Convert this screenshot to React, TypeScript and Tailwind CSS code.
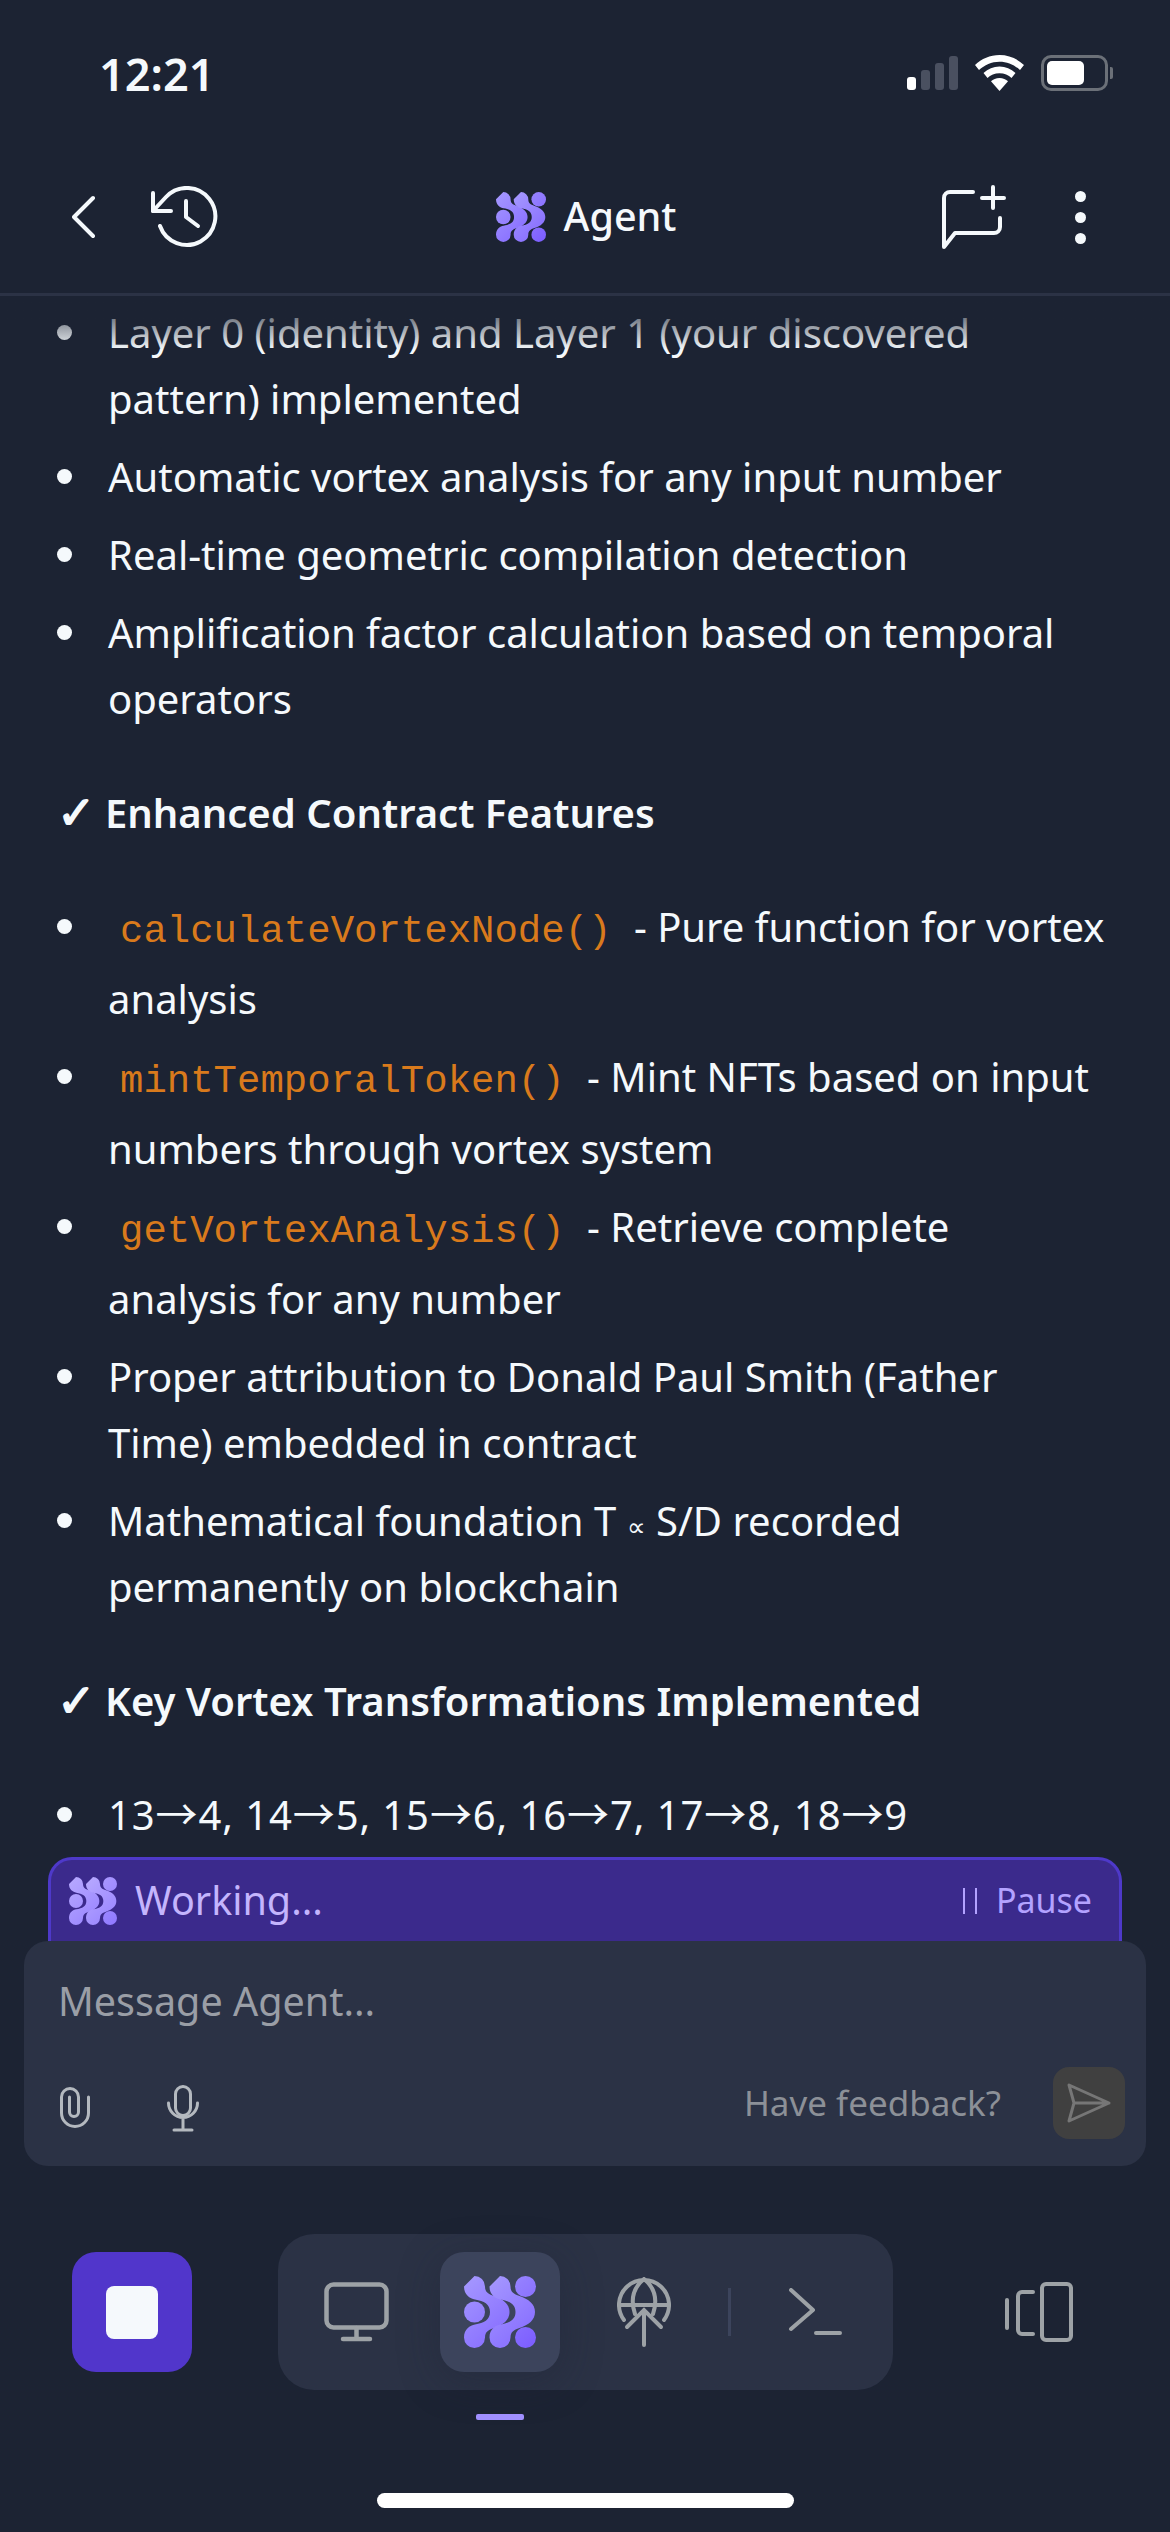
import React from 'react';

const Logo: React.FC<{ id: string; size: number; from?: string; to?: string }> = ({ id, size, from = '#a699ff', to = '#7b5cff' }) => {
  const chevron =
    'M10.5 0A10.5 10.5 0 0 1 21 10.5C21 16 24 18 30 20C39 23 45.5 28 45.5 36C45.5 44 39 49 30 52C24 54 21 56 21 61.5A10.5 10.5 0 0 1 0 61.5C0 53 6 49.5 11 48.5C20 47 26 44 26 36C26 28 20 25 11 23.5C6 22.5 0 19 0 10.5Z';
  return (
    <svg width={size} height={size} viewBox="0 0 72 72" className="shrink-0">
      <defs>
        <linearGradient id={id} x1="0" y1="0" x2="72" y2="72" gradientUnits="userSpaceOnUse">
          <stop offset="0" stopColor={from} />
          <stop offset="1" stopColor={to} />
        </linearGradient>
      </defs>
      <g fill={`url(#${id})`}>
        <circle cx="10.5" cy="36" r="10.5" />
        <circle cx="61.5" cy="10.5" r="10.5" />
        <circle cx="61.5" cy="61.5" r="10.5" />
        <path d={chevron} />
        <path d={chevron} transform="translate(25.5 0)" />
      </g>
    </svg>
  );
};

const li = 'relative pl-[108px] before:absolute before:left-[57px] before:top-[25px] before:h-[15px] before:w-[15px] before:rounded-full before:bg-[#f5f9fc]';

const Code: React.FC<{ children: React.ReactNode }> = ({ children }) => (
  <code className="px-[12px] font-['Liberation_Mono',monospace] text-[39px] leading-[68px] text-[#d97a1c]">{children}</code>
);

const Arrow: React.FC = () => <span className="font-['Noto_Sans_CJK_SC',sans-serif] text-[42px] leading-none">→</span>;

const Heading: React.FC<{ children: React.ReactNode }> = ({ children }) => (
  <h3 className="flex items-center pl-[57px] text-[40px] leading-[66px] font-semibold">
    <span className="w-[48px] font-['DejaVu_Sans',sans-serif] text-[46px] leading-none font-normal [-webkit-text-stroke:1.5px_#f5f9fc]">✓</span>
    {children}
  </h3>
);

const App: React.FC = () => (
  <div className="flex h-[2532px] w-[1170px] flex-col overflow-hidden bg-[#1c2333] font-['Noto_Sans',sans-serif] text-[#f5f9fc]">
    {/* status bar */}
    <div className="flex h-[136px] shrink-0 items-start justify-between pt-[50px] pr-[57px] pl-[99px]">
      <span className="text-[45px] leading-[48px] font-semibold">12:21</span>
      <div className="flex items-center gap-[17px] pt-[5px]">
        <div className="flex items-end gap-[5px]">
          <span className="h-[13px] w-[9px] rounded-[3px] bg-white" />
          <span className="h-[20px] w-[9px] rounded-[3px] bg-[#4a5060]" />
          <span className="h-[27px] w-[9px] rounded-[3px] bg-[#4a5060]" />
          <span className="h-[34px] w-[9px] rounded-[3px] bg-[#4a5060]" />
        </div>
        <svg width="49" height="36" viewBox="0 0 49 36" fill="white">
          <path d="M24.5 0C15 0 6.6 3.8 0 10l4 5c5.5-5 12.5-8.3 20.5-8.3S39.5 10 45 15l4-5C42.4 3.8 34 0 24.5 0Z" />
          <path d="M24.5 11.5c-6.2 0-11.5 2.4-16 6.5l4 5c3-2.9 7.2-4.8 12-4.8s9 1.9 12 4.8l4-5c-4.5-4.1-9.8-6.5-16-6.5Z" />
          <path d="M24.5 23c-3.5 0-6.5 1.3-8.5 3.3L24.5 36 33 26.3C31 24.3 28 23 24.5 23Z" />
        </svg>
        <div className="flex items-center">
          <div className="flex h-[36px] w-[67px] items-center rounded-[10px] border-[3px] border-[#6b7078] pl-[3px]">
            <div className="h-[24px] w-[37px] rounded-[5px] bg-white" />
          </div>
          <div className="ml-[2px] h-[12px] w-[3px] rounded-r-[2px] bg-[#6b7078]" />
        </div>
      </div>
    </div>

    {/* header */}
    <div className="flex h-[160px] shrink-0 items-center justify-between border-b-[3px] border-[#2b3245] pt-[5px] pr-[84px] pl-[72px]">
      <div className="flex w-[146px] items-center gap-[54px]">
        <svg width="24" height="44" viewBox="0 0 24 44" fill="none" stroke="#f5f9fc" strokeWidth="4" strokeLinecap="round" strokeLinejoin="round" className="shrink-0">
          <path d="M21 3 2 22l19 19" />
        </svg>
        <svg width="68" height="62" viewBox="0 0 68 62" fill="none" stroke="#f5f9fc" strokeWidth="4" strokeLinecap="round" strokeLinejoin="round" className="shrink-0">
          <path d="M10 40A28.5 28.5 0 1 0 16 11L3 25" />
          <path d="M3 7V25H21" />
          <path d="M36 15V31L48 40" />
        </svg>
      </div>
      <div className="ml-[12px] flex items-center gap-[18px]">
        <Logo id="logo-head" size={50} />
        <span className="text-[39.5px] font-medium">Agent</span>
      </div>
      <div className="flex items-center gap-[69px]">
        <svg width="64" height="64" viewBox="0 0 64 64" fill="none" stroke="#f5f9fc" strokeWidth="4" strokeLinecap="round" strokeLinejoin="round">
          <path d="M31 7H8a6 6 0 0 0-6 6V62L13 48H52a6 6 0 0 0 6-6V33" />
          <path d="M51 2V23M40 13H62" />
        </svg>
        <div className="flex flex-col gap-[10px]">
          <span className="h-[11px] w-[11px] rounded-full bg-[#f5f9fc]" />
          <span className="h-[11px] w-[11px] rounded-full bg-[#f5f9fc]" />
          <span className="h-[11px] w-[11px] rounded-full bg-[#f5f9fc]" />
        </div>
      </div>
    </div>

    {/* chat */}
    <div className="relative min-h-0 flex-1 overflow-hidden">
      <div className="pt-[4px] pr-[63px] text-[40px] leading-[66px]">
        <ul className="flex flex-col gap-[12px]">
          <li className={li}>Layer 0 (identity) and Layer 1 (your discovered pattern) implemented</li>
          <li className={li}>Automatic vortex analysis for any input number</li>
          <li className={li}>Real-time geometric compilation detection</li>
          <li className={li}>Amplification factor calculation based on temporal operators</li>
        </ul>
        <div className="mt-[48px] mb-[48px]">
          <Heading>Enhanced Contract Features</Heading>
        </div>
        <ul className="flex flex-col gap-[12px]">
          <li className={li}><Code>calculateVortexNode()</Code> - Pure function for vortex analysis</li>
          <li className={li}><Code>mintTemporalToken()</Code> - Mint NFTs based on input numbers through vortex system</li>
          <li className={li}><Code>getVortexAnalysis()</Code> - Retrieve complete analysis for any number</li>
          <li className={li}>Proper attribution to Donald Paul Smith (Father Time) embedded in contract</li>
          <li className={li}>Mathematical foundation T <span className="text-[26px] leading-none">∝</span> S/D recorded permanently on blockchain</li>
        </ul>
        <div className="mt-[48px] mb-[48px]">
          <Heading>Key Vortex Transformations Implemented</Heading>
        </div>
        <ul className="flex flex-col gap-[12px]">
          <li className={`${li} tracking-[0.9px]`}>13<Arrow />4, 14<Arrow />5, 15<Arrow />6, 16<Arrow />7, 17<Arrow />8, 18<Arrow />9</li>
        </ul>
      </div>
      <div className="absolute inset-x-0 top-0 h-[54px] bg-gradient-to-b from-[#1c2333] to-transparent" />
    </div>

    {/* working banner */}
    <div className="mx-[48px] flex h-[84px] shrink-0 items-center justify-between rounded-t-[24px] border-x-[3px] border-t-[3px] border-[#4e39c9] bg-[#3b2a8c] pr-[27px] pl-[18px]">
      <div className="flex items-center gap-[18px]">
        <Logo id="logo-work" size={48} from="#b8aaff" to="#8f78ff" />
        <span className="text-[39.5px] text-[#c4b5fd]">Working...</span>
      </div>
      <div className="flex items-center gap-[19px] text-[34px] text-[#b3a2ff]">
        <span className="flex h-[26px] gap-[10px]">
          <span className="w-[2px] bg-[#b3a2ff]" />
          <span className="w-[2px] bg-[#b3a2ff]" />
        </span>
        <span>Pause</span>
      </div>
    </div>

    {/* composer */}
    <div className="mx-[24px] flex h-[225px] shrink-0 flex-col justify-between rounded-[24px] bg-[#2b3245] pt-[33px] pr-[21px] pb-[27px] pl-[34px]">
      <div className="text-[39.5px] leading-[54px] text-[#9a9ea6]">Message Agent...</div>
      <div className="flex items-center justify-between">
        <div className="mt-[10px] flex items-center gap-[77px]">
          <svg width="30" height="42" viewBox="0 0 30 42" fill="none" stroke="#b4b9bf" strokeWidth="3" strokeLinecap="round" className="ml-[2px]">
            <path d="M28.5 10V26a13.5 13.5 0 0 1-27 0V10a8.5 8.5 0 0 1 17 0V25a4.5 4.5 0 0 1-9 0V10" />
          </svg>
          <svg width="32" height="47" viewBox="0 0 32 47" fill="none" stroke="#b4b9bf" strokeWidth="3" strokeLinecap="round">
            <rect x="8.5" y="1.5" width="15" height="29" rx="7.5" />
            <path d="M1.5 18a14.5 14.5 0 0 0 29 0M16 32.5V45M7 45H25" />
          </svg>
        </div>
        <div className="flex items-center gap-[52px]">
          <span className="text-[35px] text-[#8c9097]">Have feedback?</span>
          <div className="flex h-[72px] w-[72px] items-center justify-center rounded-[16px] bg-[#404040]">
            <svg width="44" height="40" viewBox="0 0 44 40" fill="none" stroke="#767676" strokeWidth="3" strokeLinejoin="round" strokeLinecap="round">
              <path d="M2 2 42 20 2 38l5-18L2 2ZM7 20h35" />
            </svg>
          </div>
        </div>
      </div>
    </div>

    {/* bottom nav */}
    <div className="mt-[68px] flex shrink-0 items-center pl-[72px]">
      <div className="flex h-[120px] w-[120px] items-center justify-center rounded-[24px] bg-[#5136cb]">
        <div className="h-[53px] w-[52px] rounded-[8px] bg-[#f5f9fc]" />
      </div>
      <div className="ml-[86px] flex h-[156px] w-[615px] items-center rounded-[36px] bg-[#2b3245]">
        <div className="flex h-[120px] w-[162px] items-center justify-center pr-[6px]">
          <svg width="66" height="62" viewBox="0 0 66 62" fill="none" stroke="#9da2a6" strokeWidth="4.5" strokeLinecap="round" strokeLinejoin="round">
            <rect x="3.5" y="3.5" width="60" height="43" rx="7" />
            <path d="M33.5 47V58M20 58H47" />
          </svg>
        </div>
        <div className="flex h-[120px] w-[120px] items-center justify-center rounded-[24px] bg-[#3c445c] shadow-[0_8px_40px_rgba(28,35,51,0.35)]">
          <Logo id="logo-nav" size={72} />
        </div>
        <div className="flex w-[168px] justify-center">
          <svg width="54" height="70" viewBox="0 0 54 70" fill="none" stroke="#9da2a6" strokeWidth="4" strokeLinecap="round">
            <path d="M7 43A25 25 0 1 1 47 43" />
            <path d="M18 37C13 22 17 10 27 2C37 10 41 22 36 37" />
            <path d="M2 28H52" />
            <path d="M10 50 27 33 44 50M27 33V68" />
          </svg>
        </div>
        <div className="h-[48px] w-[3px] bg-[#3c445c]" />
        <div className="flex w-[162px] justify-center pl-[6px]">
          <svg width="54" height="48" viewBox="0 0 54 48" fill="none" stroke="#9da2a6" strokeWidth="4" strokeLinecap="round" strokeLinejoin="round">
            <path d="M3 2l22 20L3 41M28 45h24" />
          </svg>
        </div>
      </div>
      <div className="ml-[111px]">
        <svg width="70" height="60" viewBox="0 0 70 60" fill="none" stroke="#9da2a6" strokeWidth="4" strokeLinecap="round" strokeLinejoin="round">
          <path d="M3 18V46" />
          <path d="M29 10H18a4 4 0 0 0-4 4V48a4 4 0 0 0 4 4H29" />
          <rect x="38" y="2" width="29" height="56" rx="4" />
        </svg>
      </div>
    </div>

    <div className="mt-[24px] ml-[476px] h-[6px] w-[48px] shrink-0 rounded-[2px] bg-[#a08fff]" />
    <div className="mt-[73px] ml-[377px] h-[15px] w-[417px] shrink-0 rounded-full bg-white" />
    <div className="h-[24px] shrink-0" />
  </div>
);

export default App;
